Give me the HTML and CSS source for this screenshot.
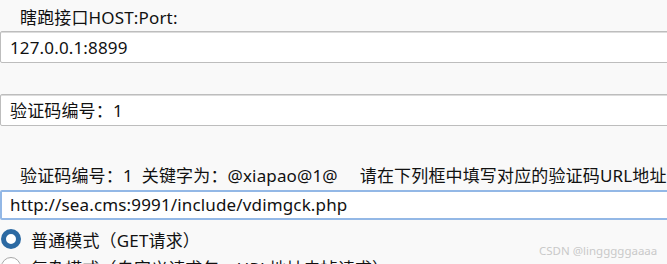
FILE: index.html
```html
<!DOCTYPE html>
<html lang="zh-CN">
<head>
<meta charset="utf-8">
<title>验证码识别配置</title>
<link rel="stylesheet" href="styles.css">
</head>
<body>
<div class="page">
  <div class="label first">瞎跑接口HOST:Port:</div>
  <div class="field">127.0.0.1:8899</div>
  <div class="spacer"></div>
  <div class="field">验证码编号：1</div>
  <div class="label second"><span>验证码编号：1</span><span class="g1">关键字为：</span><span class="g2">@xiapao@1@</span><span class="g3">请在下列框中填写对应的验证码URL地址</span></div>
  <div class="field focus">http://sea.cms:9991/include/vdimgck.php</div>
  <div class="radios">
    <div class="radio-row"><span class="radio on"></span><span>普通模式（GET请求）</span></div>
    <div class="radio-row"><span class="radio"></span><span>复杂模式（自定义请求包，URL地址去掉请求）</span></div>
  </div>
  <div class="watermark">CSDN @lingggggaaaa</div>
</div>
</body>
</html>
```
FILE: styles.css
```css
html, body {
  margin: 0;
  padding: 0;
  background: #f9f9f9;
}
.page {
  position: relative;
  width: 667px;
  height: 264px;
  overflow: hidden;
  font-family: "Noto Sans", "Noto Sans CJK SC", sans-serif;
  font-size: 17px;
  letter-spacing: 0.15px;
  color: #111;
}
.label {
  padding-left: 20px;
  white-space: nowrap;
}
.label.first {
  height: 31px;
  line-height: 36px;
}
.label.second {
  height: 64px;
  line-height: 20px;
  box-sizing: border-box;
  padding-top: 40px;
}
.g1 { margin-left: 9px; }
.g2 { margin-left: 0; }
.g3 { margin-left: 22px; }
.field {
  box-sizing: border-box;
  width: 700px;
  height: 32px;
  background: #fff;
  border: 1px solid #bdbdbd;
  border-radius: 2px;
  box-shadow: inset 0 1px 0 #dcdcdc;
  padding-left: 9px;
  line-height: 31px;
  white-space: nowrap;
}
.field.focus {
  height: 30px;
  border: 2px solid #93b8e6;
  box-shadow: none;
  padding-left: 8px;
  line-height: 26px;
}
.spacer {
  height: 31px;
}
.radios {
  margin-top: 5px;
}
.radio-row {
  display: flex;
  align-items: center;
  gap: 10px;
  padding-left: 1px;
  height: 28px;
  white-space: nowrap;
}
.radio {
  box-sizing: border-box;
  width: 20px;
  height: 20px;
  border-radius: 50%;
  background: #fff;
  border: 1px solid #a8a8a8;
  flex: none;
}
.radio.on {
  border: 5.5px solid #2c6aa3;
}
.watermark {
  position: absolute;
  left: 539px;
  top: 243px;
  font-size: 11.5px;
  letter-spacing: 0;
  color: #c9c9c9;
  font-family: "Noto Sans", "Liberation Sans", sans-serif;
  white-space: nowrap;
}
```
